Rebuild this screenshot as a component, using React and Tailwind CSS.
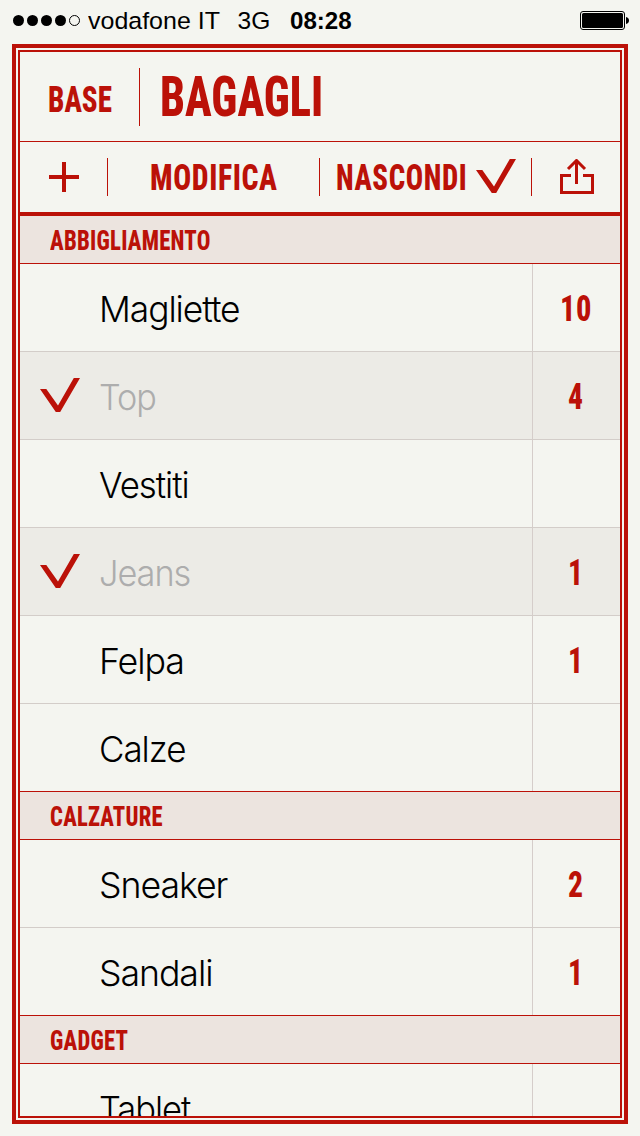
import { useLayoutEffect, useRef } from "react";

// Text that is condensed or widened to fill a column of the given width.
function Fit({ width, className = "", children }) {
  const ref = useRef(null);
  useLayoutEffect(() => {
    const el = ref.current;
    el.style.transform = `scaleX(${width / el.offsetWidth})`;
  }, [width, children]);
  return (
    <span className="block shrink-0" style={{ width }}>
      <span ref={ref} className={`inline-block origin-left whitespace-nowrap ${className}`}>
        {children}
      </span>
    </span>
  );
}

const display = "font-['Roboto',sans-serif] font-extrabold [font-stretch:75%] text-[#bb1108]";

function Check() {
  return (
    <svg width="40" height="34" viewBox="0 0 40 34" className="block shrink-0 fill-[#bb1108]">
      <path d="M0 11h6.3L18 27.5 33.8 0H40L20.2 34h-4.4z" />
    </svg>
  );
}

function Divider({ className }) {
  return <div className={`w-px shrink-0 bg-[#bb1108] ${className}`} />;
}

function StatusBar() {
  return (
    <div className="flex h-11 items-start pl-[13px] pr-[11px] font-['Liberation_Sans',sans-serif] text-[24.5px] leading-6 text-black">
      <div className="mt-[15px] flex gap-[3px]">
        {[0, 1, 2, 3].map((i) => (
          <span key={i} className="size-[11px] rounded-full bg-black" />
        ))}
        <span className="size-[11px] rounded-full border border-black" />
      </div>
      <div className="ml-[8px] mt-[9px] flex">
        <Fit width={131.5}>vodafone IT</Fit>
        <div className="w-[18px]" />
        <Fit width={33}>3G</Fit>
        <div className="w-[19px]" />
        <Fit width={62} className="font-bold">08:28</Fit>
      </div>
      <svg width="49" height="19" viewBox="0 0 49 19" className="ml-auto mt-[11px] block">
        <rect x="0.5" y="0.5" width="44" height="18" rx="2.5" fill="none" stroke="#000" />
        <rect x="2" y="2" width="41" height="15" rx="1.5" />
        <path d="M46 6c4 .5 4 6.500 0 7z" />
      </svg>
    </div>
  );
}

function Toolbar() {
  return (
    <div className="flex h-[74px] items-start border-b-4 border-[#bb1108]">
      <div className="flex w-[87px] justify-center pt-5">
        <svg width="30" height="30" viewBox="0 0 30 30" className="ml-[1px] block fill-[#bb1108]">
          <path d="M13 0h4v13h13v4H17v13h-4V17H0v-4h13z" />
        </svg>
      </div>
      <Divider className="mt-4 h-[38px]" />
      <div className="flex w-[211px] justify-center pl-px pt-4">
        <Fit width={128} className={`${display} text-[37px] leading-10 tracking-[0.02em]`}>MODIFICA</Fit>
      </div>
      <Divider className="mt-4 h-[38px]" />
      <div className="flex w-[211px] pl-4">
        <div className="pt-4">
          <Fit width={131} className={`${display} text-[37px] leading-10 tracking-[0.02em]`}>NASCONDI</Fit>
        </div>
        <div className="ml-[9px] pt-[17px]"><Check /></div>
      </div>
      <Divider className="mt-4 h-[38px]" />
      <svg width="34" height="35" viewBox="0 0 34 35" className="ml-7 mt-[17px] block fill-none stroke-[#bb1108] stroke-3">
        <path d="M11 16.500H1.500v17h31v-17H23M16.500 25V2M8 10l8.500-8.500L25 10" />
      </svg>
    </div>
  );
}

function Section({ title, width, items }) {
  return (
    <section>
      <h2 className={`flex h-12 items-center border-b border-[#bb1108] bg-[#ece4df] pl-[30px] pt-[2px] ${display}`}>
        <Fit width={width} className="text-[28.5px] leading-10 tracking-[0.01em]">{title}</Fit>
      </h2>
      <ul>
        {items.map((it, i) => (
          <li
            key={it.name}
            className={`flex h-[88px] border-b ${i === items.length - 1 ? "border-[#bb1108]" : "border-[#d3cdc9]"} ${it.done ? "bg-[#ecebe6]" : ""}`}
          >
            <div className="w-[79px] shrink-0 pl-5 pt-[26px]">{it.done && <Check />}</div>
            <div className="flex-1 pt-[21px]">
              <Fit
                width={it.width}
                className={`font-['Inter',sans-serif] text-[36px] leading-[48px] font-light tracking-[-0.03em] ${it.done ? "text-[#adadad]" : "text-black"}`}
              >
                {it.name}
              </Fit>
            </div>
            <div className="flex w-[88px] justify-center border-l border-[#d5cdca] pr-[2px] pt-[21px]">
              {it.count && (
                <Fit width={it.count.length * 16} className={`${display} text-[37px] leading-[48px] tracking-[0.02em]`}>
                  {it.count}
                </Fit>
              )}
            </div>
          </li>
        ))}
      </ul>
    </section>
  );
}

const sections = [
  {
    title: "ABBIGLIAMENTO",
    width: 161,
    items: [
      { name: "Magliette", width: 140.5, count: "10" },
      { name: "Top", width: 57, count: "4", done: true },
      { name: "Vestiti", width: 90 },
      { name: "Jeans", width: 91.5, count: "1", done: true },
      { name: "Felpa", width: 84.5, count: "1" },
      { name: "Calze", width: 86.5 },
    ],
  },
  {
    title: "CALZATURE",
    width: 112.5,
    items: [
      { name: "Sneaker", width: 128, count: "2" },
      { name: "Sandali", width: 113, count: "1" },
    ],
  },
  { title: "GADGET", width: 78, items: [{ name: "Tablet", width: 91 }] },
];

export default function App() {
  return (
    <div className="h-[1136px] w-[640px] overflow-hidden bg-[#f4f5f0]">
      <StatusBar />
      <div className="mx-3 h-[1080px] border-4 border-[#bb1108] p-[2px]">
        <div className="h-full overflow-hidden border-2 border-[#bb1108]">
          <header className="flex h-[90px] border-b border-[#bb1108] pl-7">
            <div className="pt-7">
              <Fit width={63.5} className={`${display} text-[37px] leading-10`}>BASE</Fit>
            </div>
            <Divider className="ml-[27.5px] mt-4 h-[58px]" />
            <div className="ml-5 pt-[15px]">
              <Fit width={163} className={`${display} text-[55px] leading-[60px]`}>BAGAGLI</Fit>
            </div>
          </header>
          <Toolbar />
          {sections.map((s) => (
            <Section key={s.title} {...s} />
          ))}
        </div>
      </div>
    </div>
  );
}
